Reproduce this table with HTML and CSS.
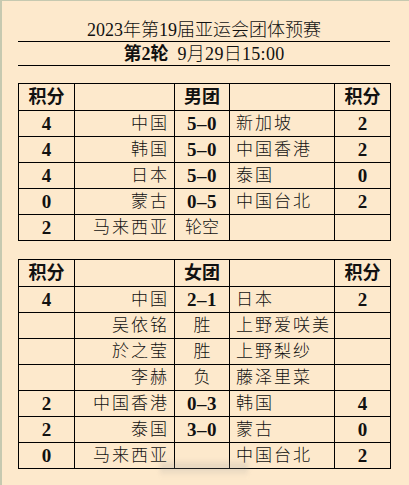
FILE: index.html
```html
<!DOCTYPE html>
<html lang="zh">
<head>
<meta charset="utf-8">
<title>2023年第19届亚运会团体预赛</title>
<link rel="stylesheet" href="styles.css">
</head>
<body>
<div class="page">
  <div class="title">2023年第19届亚运会团体预赛</div>
  <div class="subtitle"><b class="round">第2轮</b><span class="time">9月29日15:00</span></div>

  <table class="board first">
    <colgroup><col class="c1"><col class="c2"><col class="c3"><col class="c4"><col class="c5"></colgroup>
    <tr class="head"><th>积分</th><th></th><th>男团</th><th></th><th>积分</th></tr>
    <tr><td class="num">4</td><td class="l">中国</td><td class="score">5–0</td><td class="r">新加坡</td><td class="num">2</td></tr>
    <tr><td class="num">4</td><td class="l">韩国</td><td class="score">5–0</td><td class="r">中国香港</td><td class="num">2</td></tr>
    <tr><td class="num">4</td><td class="l">日本</td><td class="score">5–0</td><td class="r">泰国</td><td class="num">0</td></tr>
    <tr><td class="num">0</td><td class="l">蒙古</td><td class="score">0–5</td><td class="r">中国台北</td><td class="num">2</td></tr>
    <tr><td class="num">2</td><td class="l">马来西亚</td><td class="mid">轮空</td><td class="r"></td><td class="num"></td></tr>
  </table>

  <table class="board second">
    <colgroup><col class="c1"><col class="c2"><col class="c3"><col class="c4"><col class="c5"></colgroup>
    <tr class="head"><th>积分</th><th></th><th>女团</th><th></th><th>积分</th></tr>
    <tr><td class="num">4</td><td class="l">中国</td><td class="score">2–1</td><td class="r">日本</td><td class="num">2</td></tr>
    <tr><td class="num"></td><td class="l">吴依铭</td><td class="mid">胜</td><td class="r">上野爱咲美</td><td class="num"></td></tr>
    <tr><td class="num"></td><td class="l">於之莹</td><td class="mid">胜</td><td class="r">上野梨纱</td><td class="num"></td></tr>
    <tr><td class="num"></td><td class="l">李赫</td><td class="mid">负</td><td class="r">藤泽里菜</td><td class="num"></td></tr>
    <tr><td class="num">2</td><td class="l">中国香港</td><td class="score">0–3</td><td class="r">韩国</td><td class="num">4</td></tr>
    <tr><td class="num">2</td><td class="l">泰国</td><td class="score">3–0</td><td class="r">蒙古</td><td class="num">0</td></tr>
    <tr><td class="num">0</td><td class="l">马来西亚</td><td class="score"></td><td class="r">中国台北</td><td class="num">2</td></tr>
  </table>

  <div class="smear"></div>
</div>
</body>
</html>
```

FILE: styles.css
```css
html, body {
  margin: 0;
  padding: 0;
  background: #fde9cc;
}

.page {
  position: relative;
  width: 409px;
  height: 485px;
  box-sizing: border-box;
  background: #fde9cc;
  border-left: 2px solid #c6c9b0;
  border-top: 1px solid #c6c9b0;
  padding: 0 19px 0 16px;
  font-family: "Liberation Serif", "Noto Sans CJK SC", serif;
  color: #111;
  overflow: hidden;
}

.title {
  height: 41px;
  box-sizing: border-box;
  border-bottom: 1px solid #000;
  display: flex;
  align-items: flex-end;
  justify-content: center;
  font-size: 18px;
  line-height: 20px;
  padding-bottom: 1px;
  font-weight: 300;
}

.subtitle {
  height: 24px;
  box-sizing: border-box;
  border-bottom: 1px solid #000;
  display: flex;
  align-items: center;
  justify-content: center;
  gap: 9px;
  font-size: 18px;
  line-height: 20px;
}

.subtitle .round {
  font-weight: 700;
}

.subtitle .time {
  font-weight: 300;
  letter-spacing: 0.3px;
}

.board {
  width: 372px;
  border-collapse: collapse;
  table-layout: fixed;
  font-size: 17px;
}

.board.first {
  margin-top: 17px;
}

.board.second {
  margin-top: 18px;
}

.c1 { width: 56px; }
.c2 { width: 100px; }
.c3 { width: 55px; }
.c4 { width: 105px; }
.c5 { width: 56px; }

.board th,
.board td {
  border: 1px solid #000;
  padding: 0 5px;
  height: 25px;
  line-height: 20px;
  white-space: nowrap;
  overflow: hidden;
  font-weight: 300;
}

.board .head th {
  height: 26px;
  font-weight: 700;
  font-size: 18px;
  text-align: center;
}

.board .l {
  text-align: right;
  letter-spacing: 2px;
  padding-right: 5px;
}

.board .r {
  text-align: left;
  letter-spacing: 2px;
  padding-left: 6px;
}

.board .num,
.board .score {
  text-align: center;
  font-weight: 700;
  font-size: 19px;
}

.board .score {
  letter-spacing: 0.5px;
  padding: 0;
}

.board .mid {
  text-align: center;
  padding: 0;
}

.smear {
  position: absolute;
  left: 158px;
  top: 458px;
  width: 88px;
  height: 18px;
  background: linear-gradient(to bottom, rgba(150,150,150,0) 0%, rgba(150,150,150,0.25) 45%, rgba(150,150,150,0) 100%);
  filter: blur(2px);
}
```
